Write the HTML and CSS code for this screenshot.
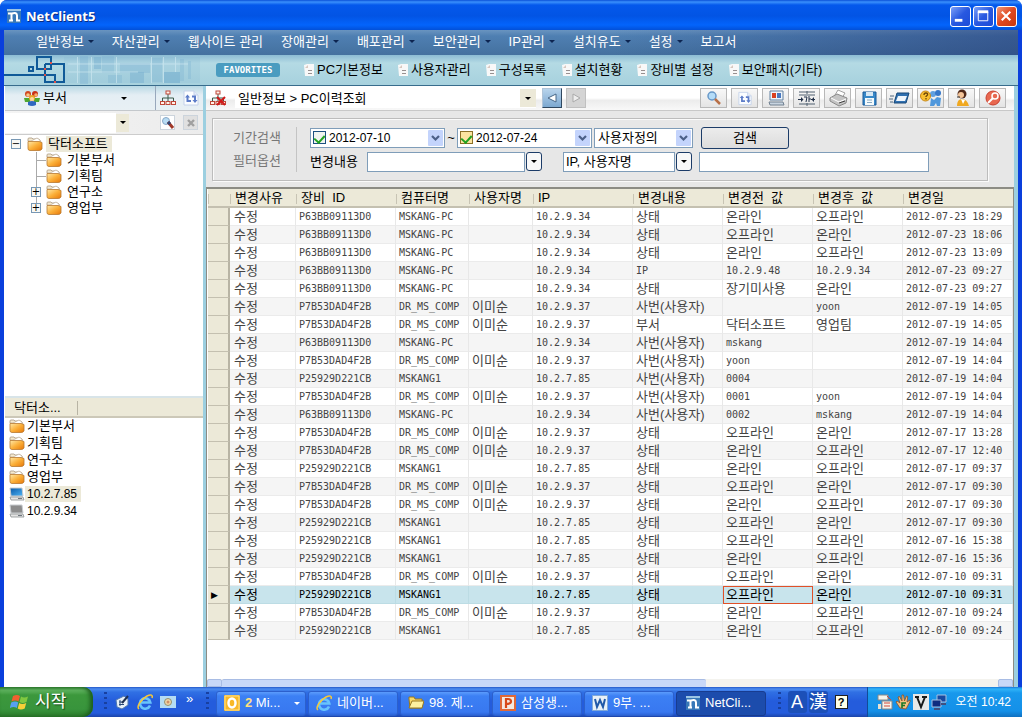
FILE: index.html
```html
<!DOCTYPE html>
<html lang="ko">
<head>
<meta charset="utf-8">
<title>NetClient5</title>
<link rel="stylesheet" href="styles.css">
</head>
<body>
<svg class="defs" aria-hidden="true">
  <defs>
    <linearGradient id="gold" x1="0" y1="0" x2="1" y2="1"><stop offset="0" stop-color="#ffe9a8"/><stop offset=".5" stop-color="#fbb03a"/><stop offset="1" stop-color="#e87808"/></linearGradient>
    <linearGradient id="screen" x1="0" y1="0" x2="1" y2="1"><stop offset="0" stop-color="#0a58a8"/><stop offset="1" stop-color="#4cb4f4"/></linearGradient>
    <symbol id="folder" viewBox="0 0 16 14"><path d="M1 4V2q0-1 1-1h3l1 1h5l2 1v4" fill="#f6ead0" stroke="#a89880" stroke-width=".8"/><path d="M1 4h3l6-3 3 2v3" fill="#fff" stroke="#b8a890" stroke-width=".7"/><path d="M1 4.500h11l3 1v6.500q-1 1.500-3 1.500H3q-2 0-2-2z" fill="url(#gold)" stroke="#b87830" stroke-width=".8"/></symbol>
    <symbol id="doc" viewBox="0 0 10 12"><path d="M0 1l3-1h7v12H1z" fill="#f8f8f8"/><path d="M1 4L4 1v3z" fill="#d8c8c0"/><path d="M4 6.500h4M4 9.500h4" stroke="#989090"/></symbol>
    <symbol id="org" viewBox="0 0 16 16"><path d="M8 4v4M2.500 11V8h11v3M8 8v3" fill="none" stroke="#385848"/><g fill="#fff0e8" stroke="#c04838"><rect x="6" y="1" width="4" height="3"/><rect x=".5" y="11.500" width="4" height="3"/><rect x="6" y="11.500" width="4" height="3"/><rect x="11.500" y="11.500" width="4" height="3"/></g></symbol>
    <symbol id="sync" viewBox="0 0 16 16"><path d="M2 1h9l4 4v10H1V1z" fill="#fbfdff" stroke="#c4d2ea"/><path d="M11 1v4h4" fill="#e4ecfa" stroke="#c4d2ea"/><path d="M4.500 6v5h3.500M12 11.500V6.500H9" fill="none" stroke="#5c7cc8" stroke-width="2"/><path d="M2 7.500l2.500-3 2.500 3zM9.500 10l2.500 3 2.500-3z" fill="#5c7cc8"/></symbol>
    <symbol id="netlogo" viewBox="0 0 14 14"><rect width="14" height="14" fill="#3878b8"/><path d="M1 4.500h4q5-1.500 5 2v5h3" fill="none" stroke="#fff" stroke-width="2"/><path d="M4.500 4v7M2 11.500h4" stroke="#fff" stroke-width="2"/><path d="M0 0h14v2H0z" fill="#9cc4e4"/></symbol>
    <symbol id="chev" viewBox="0 0 15 16"><rect width="15" height="16" rx="1" fill="#c4d4fc"/><path d="M4 6l3.500 3.500L11 6" fill="none" stroke="#4c6088" stroke-width="2.200"/></symbol>
    <symbol id="ie" viewBox="0 0 16 16"><path d="M13 11.500A5.200 5.200 0 1 1 13.300 8.500H4" fill="none" stroke="#68c4fc" stroke-width="2.600"/><path d="M2 15C-1 13 4 5 10 2c4-2 6-1 5 2" fill="none" stroke="#f8c838" stroke-width="1.500"/></symbol>
    <symbol id="pc" viewBox="0 0 16 14"><path d="M1 1h12l1 8H2z" stroke="#c8ccd0"/><path d="M1 10h13l1 3H2z" fill="#e4e4e4" stroke="#8c9090" stroke-width=".8"/><path d="M9 11.500h4" stroke="#707880"/></symbol>
  </defs>
</svg>

<div class="window">
  <header class="titlebar">
    <svg class="i14"><use href="#netlogo"/></svg>
    <h1>NetClient5</h1>
    <div class="winctl">
      <button aria-label="최소화"><svg viewBox="0 0 20 20"><path d="M4 14h8" stroke="#fff" stroke-width="3"/></svg></button>
      <button aria-label="최대화"><svg viewBox="0 0 20 20"><path d="M4.500 5v9.500h10V5" fill="none" stroke="#fff"/><path d="M4 5h11" stroke="#fff" stroke-width="3"/></svg></button>
      <button class="close" aria-label="닫기"><svg viewBox="0 0 20 20"><path d="M5 5l9 9M14 5l-9 9" stroke="#fff" stroke-width="2.200"/></svg></button>
    </div>
  </header>

  <div class="frame">
    <nav class="menubar">
      <button class="drop">일반정보</button><button class="drop">자산관리</button><button>웹사이트 관리</button><button class="drop">장애관리</button><button class="drop">배포관리</button><button class="drop">보안관리</button><button class="drop">IP관리</button><button class="drop">설치유도</button><button class="drop">설정</button><button>보고서</button>
    </nav>

    <div class="favbar">
      <svg class="banner" viewBox="0 0 200 30" aria-hidden="true">
        <g fill="#78b0d0"><path d="M60 2h136v26H60z" opacity=".15"/><path d="M76 1h8v28h-8z" opacity=".35"/><path d="M90 2h7v12h-7z" opacity=".5"/><path d="M98 1h12v17H98z" opacity=".3"/><path d="M116 8h30v10h-30z" opacity=".35"/><path d="M126 17h14v11h-14z" opacity=".5"/><path d="M148 3h10v24h-10z" opacity=".3"/><path d="M160 17h16v11h-16z" opacity=".65"/><path d="M104 20h14v8h-14zM176 4h4v22h-4zM184 6h3v18h-3z" opacity=".3"/></g>
        <path d="M64 9h120M64 17h70M73.500 2v26M87.500 2v26M112.500 2v26M147.500 2v26M159.500 2v26M171.500 2v15" stroke="#d4ecf4" opacity=".6"/>
        <path d="M0 20h46M25 12h4v4h-4zM33 2h14v12H33zM41 9h19v18H41M41 9v10M41 20h10v7h-10z" fill="none" stroke="#105a98" stroke-width="2"/>
        <path d="M46 7h2v2h-2zM40 13h2v2h-2zM40 19h2v2h-2zM50 26h2v2h-2z" fill="#e05048"/>
      </svg>
      <span class="badge">FAVORITES</span>
      <a href="#"><svg><use href="#doc"/></svg>PC기본정보</a>
      <a href="#"><svg><use href="#doc"/></svg>사용자관리</a>
      <a href="#"><svg><use href="#doc"/></svg>구성목록</a>
      <a href="#"><svg><use href="#doc"/></svg>설치현황</a>
      <a href="#"><svg><use href="#doc"/></svg>장비별 설정</a>
      <a href="#"><svg><use href="#doc"/></svg>보안패치(기타)</a>
    </div>

    <div class="work">
      <aside class="side">
        <div class="sidebar-head">
          <button class="group drop"><svg class="i16" viewBox="0 0 16 16"><circle cx="4" cy="4" r="3" fill="#d04820"/><circle cx="11" cy="4" r="3" fill="#c83018"/><circle cx="4" cy="5" r="1.800" fill="#f8c888"/><circle cx="12" cy="5" r="1.800" fill="#f8b070"/><path d="M0 8h6v4H1zM10 8h6l-1 4h-5z" fill="#50a830"/><circle cx="8" cy="8" r="3" fill="#e8a828"/><circle cx="8" cy="9" r="2" fill="#fcd8a0"/><path d="M4 12q4-2 8 0v3q-4 2-8 0z" fill="#3068c0"/></svg><span>부서</span></button>
          <div class="side-tools">
            <button aria-label="조직도"><svg class="i16"><use href="#org"/></svg></button>
            <button aria-label="새로고침"><svg class="i16"><use href="#sync"/></svg></button>
          </div>
        </div>
        <div class="side-search">
          <input type="text" aria-label="부서 검색">
          <button class="tan drop" aria-label="목록"></button>
          <button class="mini" aria-label="찾기"><svg class="i14" viewBox="0 0 14 14"><circle cx="5" cy="5" r="3.500" fill="#b8dcf4" stroke="#88a8c8"/><path d="M7 6l5 6" stroke="#a03828" stroke-width="3"/><path d="M7 6l2 2" stroke="#304878" stroke-width="3"/></svg></button>
          <button class="mini off" aria-label="지우기"><svg class="i14" viewBox="0 0 14 14"><path d="M4 4l6 6M10 4l-6 6" stroke="#a0a0a0" stroke-width="2.400"/></svg></button>
        </div>
        <ul class="tree">
          <li class="root"><button class="twist" aria-label="접기">−</button><svg class="fold"><use href="#folder"/></svg><span class="picked">닥터소프트</span></li>
          <li><i></i><svg class="fold"><use href="#folder"/></svg><span>기본부서</span></li>
          <li><i></i><svg class="fold"><use href="#folder"/></svg><span>기획팀</span></li>
          <li><button class="twist" aria-label="펼치기">+</button><svg class="fold"><use href="#folder"/></svg><span>연구소</span></li>
          <li class="last"><button class="twist" aria-label="펼치기">+</button><svg class="fold"><use href="#folder"/></svg><span>영업부</span></li>
        </ul>
        <div class="list-head"><span>닥터소...</span></div>
        <ul class="list">
          <li><svg class="fold"><use href="#folder"/></svg><span>기본부서</span></li>
          <li><svg class="fold"><use href="#folder"/></svg><span>기획팀</span></li>
          <li><svg class="fold"><use href="#folder"/></svg><span>연구소</span></li>
          <li><svg class="fold"><use href="#folder"/></svg><span>영업부</span></li>
          <li class="num"><svg class="fold" fill="url(#screen)"><use href="#pc"/></svg><span class="picked">10.2.7.85</span></li>
          <li class="num"><svg class="fold" fill="#8c8c8c"><use href="#pc"/></svg><span>10.2.9.34</span></li>
        </ul>
      </aside>

      <main class="main">
        <div class="toolbar">
          <svg class="i16 path-icon" viewBox="0 0 16 16"><use href="#org"/><path d="M7 7l8 8M15 7l-8 8" stroke="#d01818" stroke-width="2"/></svg>
          <div class="path">
            <input type="text" aria-label="경로" value="일반정보 &gt; PC이력조회">
            <button class="tan drop" aria-label="목록"></button>
          </div>
          <button class="nav back" aria-label="뒤로"><svg viewBox="0 0 16 16"><path d="M12 4v8L4 8z" fill="#fff" stroke="#486888"/></svg></button>
          <button class="nav" aria-label="앞으로"><svg viewBox="0 0 16 16"><path d="M5 4v8l7-4z" fill="#eee" stroke="#aaa"/></svg></button>
          <div class="tools">
            <button aria-label="검색"><svg viewBox="0 0 24 18"><circle cx="10" cy="7" r="4" fill="#b4dcf8" stroke="#6898c8" stroke-width="1.500"/><path d="M13 10l5 5" stroke="#b87048" stroke-width="2.500"/></svg></button>
            <button aria-label="새로고침"><svg viewBox="0 0 24 18"><use href="#sync" x="5" y="2" width="14" height="15"/></svg></button>
            <button aria-label="원격"><svg viewBox="0 0 24 18"><path d="M6 2h13v9H6z" fill="#eef4fa" stroke="#6080a0"/><path d="M8 4h4v5H8z" fill="#d84020"/><path d="M13 4h4v5h-4z" fill="#4878c0"/><path d="M5 13h14l1 3H6z" fill="#c8d4e0" stroke="#708090"/></svg></button>
            <button aria-label="열 너비"><svg viewBox="0 0 24 18"><path d="M4 3h16M4 15h16M4 6h16M12 2v3M12 14v3" stroke="#506070"/><path d="M3 10.500h5M20 10.500h-4M9 8h3l-1 5M14 7v6M14 10h2" fill="none" stroke="#203048"/><path d="M6 8l2.500 2.500L6 13zM19 8l-2.500 2.500L19 13z" fill="#203048"/></svg></button>
            <button aria-label="인쇄"><svg viewBox="0 0 24 18"><path d="M9 6l3-5 7 3-3 5z" fill="#fff" stroke="#a0a0a0"/><path d="M4 9l7-4 10 4-1 5-7 3-9-5z" fill="#c4c4c4" stroke="#888"/><path d="M5 9l8 4 7-3" fill="none" stroke="#fff"/><path d="M13 14l6-2" stroke="#404040"/></svg></button>
            <button aria-label="저장"><svg viewBox="0 0 24 18"><path d="M6 3h13v13H6z" fill="#3888c8" stroke="#185898"/><path d="M9 3h7v4H9z" fill="#d8e8f4"/><path d="M8 9h9v7H8z" fill="#f4fafc"/><path d="M10 11h5M10 13.500h5" stroke="#88a8c0"/></svg></button>
            <button aria-label="보내기"><svg viewBox="0 0 24 18"><path d="M9 4h12l-3 10H6z" fill="#3070b0" stroke="#184878"/><path d="M10 7h9l-2 5H8z" fill="#f0f6fc"/><path d="M2 7h4M1 10h4M2 13h3" stroke="#506880"/></svg></button>
            <button aria-label="도움말"><svg viewBox="0 0 24 18"><circle cx="14" cy="5" r="3" fill="#60a0e0"/><circle cx="19" cy="4" r="3" fill="#3878c8"/><path d="M11 17l1-8 3 2 3-3 4 1-1 8h-3l-1-3-2 3z" fill="#5098dc"/><circle cx="6.500" cy="7" r="5" fill="#f8c030" stroke="#c88818"/><path d="M5 6q0-2 2-2t1.500 2L7 7.500V8M7 9v1.500" fill="none" stroke="#704808" stroke-width="1.300"/></svg></button>
            <button aria-label="상담"><svg viewBox="0 0 24 18"><circle cx="12" cy="5" r="4.500" fill="#502818"/><circle cx="11" cy="6" r="3" fill="#f4c498"/><path d="M7 17q0-7 5-7t7 7z" fill="#f0a820"/><path d="M11 10l2 5 2-4" fill="#fff"/><path d="M7 8h3" stroke="#303030"/></svg></button>
            <button aria-label="종료"><svg viewBox="0 0 24 18"><circle cx="12" cy="9" r="7" fill="#e86850" stroke="#c84030"/><circle cx="14" cy="7" r="3" fill="none" stroke="#fff" stroke-width="1.500"/><path d="M12 9l-5 5" stroke="#fff" stroke-width="2"/></svg></button>
          </div>
        </div>

        <form class="filter">
          <fieldset>
            <div class="captions"><span>기간검색</span><span>필터옵션</span></div>
            <div class="rows">
              <div class="row">
                <div class="date"><input type="checkbox" checked aria-label="시작일 사용"><input type="text" aria-label="시작일" value="2012-07-10"><button type="button" aria-label="달력"><svg><use href="#chev"/></svg></button></div>
                <span class="tilde">~</span>
                <div class="date"><input class="warm" type="checkbox" checked aria-label="종료일 사용"><input type="text" aria-label="종료일" value="2012-07-24"><button type="button" aria-label="달력"><svg><use href="#chev"/></svg></button></div>
                <div class="period"><select aria-label="기간"><option>사용자정의</option></select><svg><use href="#chev"/></svg></div>
                <button type="button" class="go">검색</button>
              </div>
              <div class="row">
                <label for="change">변경내용</label>
                <input class="box change" id="change" type="text">
                <button type="button" class="dd drop" aria-label="변경내용 목록"></button>
                <input class="box field" type="text" aria-label="검색 항목" value="IP, 사용자명">
                <button type="button" class="dd drop" aria-label="항목 목록"></button>
                <input class="box word" type="text" aria-label="검색어">
              </div>
            </div>
          </fieldset>
        </form>

        <div class="grid">
          <table>
            <colgroup><col class="c0"><col class="c1"><col class="c2"><col class="c3"><col class="c4"><col class="c5"><col class="c6"><col class="c6"><col class="c6"><col></colgroup>
            <thead><tr><th></th><th>변경사유</th><th>장비&nbsp; ID</th><th>컴퓨터명</th><th>사용자명</th><th>IP</th><th>변경내용</th><th>변경전&nbsp; 값</th><th>변경후&nbsp; 값</th><th>변경일</th></tr></thead>
            <tbody>
              <tr><th></th><td>수정</td><td>P63BB09113D0</td><td>MSKANG-PC</td><td></td><td>10.2.9.34</td><td>상태</td><td>온라인</td><td>오프라인</td><td>2012-07-23 18:29</td></tr>
              <tr><th></th><td>수정</td><td>P63BB09113D0</td><td>MSKANG-PC</td><td></td><td>10.2.9.34</td><td>상태</td><td>오프라인</td><td>온라인</td><td>2012-07-23 18:06</td></tr>
              <tr><th></th><td>수정</td><td>P63BB09113D0</td><td>MSKANG-PC</td><td></td><td>10.2.9.34</td><td>상태</td><td>온라인</td><td>오프라인</td><td>2012-07-23 13:09</td></tr>
              <tr><th></th><td>수정</td><td>P63BB09113D0</td><td>MSKANG-PC</td><td></td><td>10.2.9.34</td><td class="m">IP</td><td class="m">10.2.9.48</td><td class="m">10.2.9.34</td><td>2012-07-23 09:27</td></tr>
              <tr><th></th><td>수정</td><td>P63BB09113D0</td><td>MSKANG-PC</td><td></td><td>10.2.9.34</td><td>상태</td><td>장기미사용</td><td>온라인</td><td>2012-07-23 09:27</td></tr>
              <tr><th></th><td>수정</td><td>P7B53DAD4F2B</td><td>DR_MS_COMP</td><td>이미순</td><td>10.2.9.37</td><td>사번(사용자)</td><td></td><td class="m">yoon</td><td>2012-07-19 14:05</td></tr>
              <tr><th></th><td>수정</td><td>P7B53DAD4F2B</td><td>DR_MS_COMP</td><td>이미순</td><td>10.2.9.37</td><td>부서</td><td>닥터소프트</td><td>영업팀</td><td>2012-07-19 14:05</td></tr>
              <tr><th></th><td>수정</td><td>P63BB09113D0</td><td>MSKANG-PC</td><td></td><td>10.2.9.34</td><td>사번(사용자)</td><td class="m">mskang</td><td></td><td>2012-07-19 14:04</td></tr>
              <tr><th></th><td>수정</td><td>P7B53DAD4F2B</td><td>DR_MS_COMP</td><td>이미순</td><td>10.2.9.37</td><td>사번(사용자)</td><td class="m">yoon</td><td></td><td>2012-07-19 14:04</td></tr>
              <tr><th></th><td>수정</td><td>P25929D221CB</td><td>MSKANG1</td><td></td><td>10.2.7.85</td><td>사번(사용자)</td><td class="m">0004</td><td></td><td>2012-07-19 14:04</td></tr>
              <tr><th></th><td>수정</td><td>P7B53DAD4F2B</td><td>DR_MS_COMP</td><td>이미순</td><td>10.2.9.37</td><td>사번(사용자)</td><td class="m">0001</td><td class="m">yoon</td><td>2012-07-19 14:04</td></tr>
              <tr><th></th><td>수정</td><td>P63BB09113D0</td><td>MSKANG-PC</td><td></td><td>10.2.9.34</td><td>사번(사용자)</td><td class="m">0002</td><td class="m">mskang</td><td>2012-07-19 14:04</td></tr>
              <tr><th></th><td>수정</td><td>P7B53DAD4F2B</td><td>DR_MS_COMP</td><td>이미순</td><td>10.2.9.37</td><td>상태</td><td>오프라인</td><td>온라인</td><td>2012-07-17 13:28</td></tr>
              <tr><th></th><td>수정</td><td>P7B53DAD4F2B</td><td>DR_MS_COMP</td><td>이미순</td><td>10.2.9.37</td><td>상태</td><td>온라인</td><td>오프라인</td><td>2012-07-17 12:40</td></tr>
              <tr><th></th><td>수정</td><td>P25929D221CB</td><td>MSKANG1</td><td></td><td>10.2.7.85</td><td>상태</td><td>온라인</td><td>오프라인</td><td>2012-07-17 09:37</td></tr>
              <tr><th></th><td>수정</td><td>P7B53DAD4F2B</td><td>DR_MS_COMP</td><td>이미순</td><td>10.2.9.37</td><td>상태</td><td>오프라인</td><td>온라인</td><td>2012-07-17 09:30</td></tr>
              <tr><th></th><td>수정</td><td>P7B53DAD4F2B</td><td>DR_MS_COMP</td><td>이미순</td><td>10.2.9.37</td><td>상태</td><td>온라인</td><td>오프라인</td><td>2012-07-17 09:30</td></tr>
              <tr><th></th><td>수정</td><td>P25929D221CB</td><td>MSKANG1</td><td></td><td>10.2.7.85</td><td>상태</td><td>오프라인</td><td>온라인</td><td>2012-07-17 09:30</td></tr>
              <tr><th></th><td>수정</td><td>P25929D221CB</td><td>MSKANG1</td><td></td><td>10.2.7.85</td><td>상태</td><td>오프라인</td><td>오프라인</td><td>2012-07-16 15:38</td></tr>
              <tr><th></th><td>수정</td><td>P25929D221CB</td><td>MSKANG1</td><td></td><td>10.2.7.85</td><td>상태</td><td>온라인</td><td>오프라인</td><td>2012-07-16 15:36</td></tr>
              <tr><th></th><td>수정</td><td>P7B53DAD4F2B</td><td>DR_MS_COMP</td><td>이미순</td><td>10.2.9.37</td><td>상태</td><td>오프라인</td><td>온라인</td><td>2012-07-10 09:31</td></tr>
              <tr class="current"><th>▶</th><td>수정</td><td>P25929D221CB</td><td>MSKANG1</td><td></td><td>10.2.7.85</td><td>상태</td><td class="focus">오프라인</td><td>온라인</td><td>2012-07-10 09:31</td></tr>
              <tr><th></th><td>수정</td><td>P7B53DAD4F2B</td><td>DR_MS_COMP</td><td>이미순</td><td>10.2.9.37</td><td>상태</td><td>온라인</td><td>오프라인</td><td>2012-07-10 09:24</td></tr>
              <tr><th></th><td>수정</td><td>P25929D221CB</td><td>MSKANG1</td><td></td><td>10.2.7.85</td><td>상태</td><td>온라인</td><td>오프라인</td><td>2012-07-10 09:24</td></tr>
            </tbody>
          </table>
        </div>
        <div class="hscroll"><span class="end"></span><span class="thumb"></span><span class="track"></span><span class="end"></span></div>
      </main>
    </div>
  </div>
</div>

<footer class="taskbar">
  <button class="start"><svg viewBox="0 0 20 18"><path d="M3 3q4-2 7 0L8.500 8.500q-3-2-7 0z" fill="#f06030"/><path d="M11 3.500q3 2 7 0L16.500 9q-4 2-7 0z" fill="#80c840"/><path d="M1.200 9.500q4-2 7 0L6.800 15q-3-2-7 0z" fill="#58a0f0"/><path d="M9.200 10q3 2 7 0l-1.500 5.500q-4 2-7 0z" fill="#f8d038"/></svg>시작</button>
  <span class="grip"></span>
  <div class="quick">
    <button aria-label="바탕 화면"><svg class="i16" viewBox="0 0 16 16"><path d="M2 6l8-4 4 3v6l-6 4-5-2z" fill="#e8f0f8" stroke="#5078b0"/><path d="M5 8h5M5 10.500h5M6 6v6" stroke="#284878"/><path d="M8 9l6-7" stroke="#203050" stroke-width="2"/></svg></button>
    <button aria-label="인터넷"><svg class="i16"><use href="#ie"/></svg></button>
    <button aria-label="뷰어"><svg class="i16" viewBox="0 0 16 16"><path d="M0 2h16v12H0z" fill="#b4dcf4"/><circle cx="8" cy="8" r="3.500" fill="#f0d8a8" stroke="#909070"/><circle cx="8" cy="8" r="1.500" fill="#d09068"/></svg></button>
    <span>»</span>
  </div>
  <span class="grip"></span>
  <div class="tasks">
    <button><svg class="i16" viewBox="0 0 16 16"><rect width="16" height="16" rx="1" fill="#f8b828"/><path d="M1 1h14v14H1z" fill="none" stroke="#fce090"/><ellipse cx="8" cy="8" rx="3.500" ry="4.500" fill="none" stroke="#fff" stroke-width="2.500"/></svg><b>2</b>&nbsp;Mi...<em></em></button>
    <button><svg class="i16"><use href="#ie"/></svg>네이버...</button>
    <button><svg class="i16" viewBox="0 0 16 16"><path d="M1 4V2h5l1 2h7v9H2z" fill="#f8d868" stroke="#987820"/><path d="M1 13l3-7h12l-2 7z" fill="#fcf0a0" stroke="#987820"/></svg>98. 제...</button>
    <button><svg class="i16" viewBox="0 0 16 16"><rect width="16" height="16" fill="#f4e8e0"/><rect x="1" y="1" width="14" height="14" fill="none" stroke="#e06838" stroke-width="2"/><path d="M6 13V4h2q3 0 3 2.500T6 9" fill="none" stroke="#d84818" stroke-width="2.200"/></svg>삼성생...</button>
    <button><svg class="i16" viewBox="0 0 16 16"><rect width="16" height="16" fill="#e8f0f8"/><rect x=".5" y=".5" width="15" height="15" fill="none" stroke="#80a8d8"/><path d="M3 4l2 8 3-7 3 7 2-8" fill="none" stroke="#2058a8" stroke-width="2"/></svg>9부. ...</button>
    <button class="on"><svg class="i14"><use href="#netlogo"/></svg>NetCli...</button>
  </div>
  <span class="grip"></span>
  <div class="lang"><button class="key">A</button><button class="key">漢</button><button class="help">?</button></div>
  <div class="tray">
    <svg class="i16" viewBox="0 0 16 16"><path d="M1 1h10v5H1zM5 7h10v8H5z" fill="#f4f4ec" stroke="#888"/><path d="M1 10h3v5H1z" fill="#e8e0d0"/><path d="M10 2l4 4M7 9h6M7 12h6" stroke="#d04838"/></svg>
    <svg class="i16" viewBox="0 0 16 16"><path d="M5 14L1 8l1-1 3 2-2-6 1.500-.5L7 7V1h1.500L9.500 7l2-5 1.200.5L12 8l3-2v1.500L11 15z" fill="#f4c080" stroke="#905020" stroke-width=".8"/><path d="M7 14V9h4M7 11.500h3" fill="none" stroke="#187828" stroke-width="1.600"/></svg>
    <svg class="i16" viewBox="0 0 16 16"><rect width="16" height="16" fill="#e8e8e8"/><path d="M2 3h4M9 3h5M4 3l4 10 4-10" fill="none" stroke="#181818" stroke-width="2"/></svg>
    <svg class="i16" viewBox="0 0 16 16"><path d="M6 1h9v7H6z" fill="#1848a0" stroke="#a8c0e0"/><path d="M1 6h9v7H1z" fill="#102c80" stroke="#a8c0e0"/><path d="M3 15h6M10 10h5" stroke="#405080" stroke-width="2"/></svg>
    <time>오전 10:42</time>
  </div>
</footer>
</body>
</html>
```
FILE: styles.css
```css
* { box-sizing: border-box; }
body {
  margin: 0;
  height: 100vh;
  display: flex;
  flex-direction: column;
  overflow: hidden;
  background: #fff;
  color: #000;
  font: 13px/16px "Liberation Sans", "Noto Sans CJK KR", sans-serif;
}
button, input, select { font: inherit; color: inherit; margin: 0; padding: 0; border: 0; border-radius: 0; outline: 0; }
button { background: none; display: flex; align-items: center; white-space: nowrap; }
input[type="text"] { min-width: 0; background: #fff; }
ul { margin: 0; padding: 0; list-style: none; }
a { color: inherit; text-decoration: none; }
svg { flex: none; display: block; }
.defs { position: absolute; width: 0; height: 0; }
.i14 { width: 14px; height: 14px; }
.i16 { width: 16px; height: 16px; }
.fold { width: 16px; height: 14px; }
.drop::after {
  content: "";
  border: 3px solid transparent;
  border-top-color: currentColor;
  border-bottom: 0;
}

/* window */
.window { flex: 1; min-height: 0; display: flex; flex-direction: column; background: #0a3fdc; border-radius: 7px 7px 0 0; }
.titlebar {
  height: 30px;
  flex: none;
  display: flex;
  align-items: center;
  gap: 5px;
  padding: 2px 5px 0 7px;
  border-radius: 7px 7px 0 0;
  background: linear-gradient(#0a50d8, #3a90fc 2px, #0458ec 5px, #0254e4 16px, #0364fc 25px, #0250d8);
}
.titlebar h1 { margin: 0; flex: 1; font: bold 13px/16px "Noto Sans", sans-serif; color: #fff; text-shadow: 1px 1px #0a2c80; }
.winctl { display: flex; gap: 2px; }
.winctl button { width: 21px; height: 21px; border: 1px solid #fff; border-radius: 3px; background: linear-gradient(135deg, #7ca0f8, #2858e0 50%, #1c4cd8); }
.winctl .close { background: linear-gradient(135deg, #f09878, #e04820 50%, #c83810); }
.winctl svg { width: 19px; height: 19px; }
.frame { flex: 1; min-height: 0; display: flex; flex-direction: column; margin: 0 4px; background: #9ccfe0; }

.menubar {
  flex: none;
  display: flex;
  height: 25px;
  gap: 18px;
  padding-left: 32px;
  padding-bottom: 2px;
  color: #fff;
  background: linear-gradient(90deg, transparent 60%, #243c7890), linear-gradient(#6a94c0, #4f7fb2 6px, #44719f);
}
.menubar .drop::after { margin-left: 4px; border-top-color: #0c2450; }

.favbar {
  flex: none;
  display: flex;
  align-items: center;
  gap: 15px;
  height: 31px;
  border-bottom: 1px solid #386c8c;
  background: linear-gradient(#8cbcd4, #b4dae4 8px, #a8d2de 28px);
}
.favbar .banner { width: 200px; height: 30px; }
.favbar .badge {
  margin: 0 9px 0 -3px;
  width: 64px;
  height: 14px;
  border-radius: 3px;
  background: #4a9cc0;
  color: #fff;
  font: bold 9px/14px "DejaVu Sans Mono", monospace;
  text-align: center;
}
.favbar a { display: flex; align-items: center; gap: 3px; white-space: nowrap; }
.favbar a svg { width: 10px; height: 12px; }

.work { flex: 1; min-height: 0; display: flex; }

/* left panel */
.side { flex: none; width: 199px; margin-right: 3px; padding-left: 1px; display: flex; flex-direction: column; background: #fff; }
.sidebar-head { flex: none; height: 25px; display: flex; background: linear-gradient(#b8d8e4, #e4eef4 9px, #e8f0f4); border-bottom: 1px solid #c4c8cc; }
.group { flex: 1; gap: 3px; padding: 0 28px 0 19px; }
.group span { flex: 1; text-align: left; }
.side-tools { display: flex; gap: 7px; padding: 0 4px; border-left: 1px solid #98a8bc; }
.side-search { flex: none; height: 24px; display: flex; align-items: center; background: linear-gradient(90deg, #f4f4f4, #ececec); border-bottom: 1px solid #ccc; }
.side-search input { width: 111px; height: 20px; }
.tan { width: 13px; height: 18px; justify-content: center; background: #ece9d8; }
.mini { width: 15px; height: 15px; background: #fff; border: 1px solid #ccd4dc; justify-content: center; }
.side-search .mini { margin-left: 31px; }
.side-search .off { margin-left: 8px; background: #e0e0e0; }
.tree { flex: 26 1 0; padding: 1px 0 0 6px; overflow: hidden; }
.tree li { display: flex; align-items: center; height: 16px; gap: 5px; padding-left: 20px; background: linear-gradient(#aaa, #aaa) 25px 0 / 1px 100% no-repeat; }
.tree li.root { padding-left: 0; background: none; }
.tree li.last { background-size: 1px 8px; }
.tree i { width: 10px; height: 1px; margin-left: 5px; margin-right: -5px; background: #aaa; }
.twist { width: 10px; height: 10px; border: 1px solid #7898b4; background: #f8f8f4; justify-content: center; font: 10px/8px "DejaVu Sans", sans-serif; }
.root .fold { margin-left: 1px; }
.picked { background: #ece9d8; padding: 0 4px 0 2px; margin-left: -2px; }
.list-head { flex: none; height: 22px; padding: 3px 0; border-top: 2px solid #d8e4e8; border-bottom: 2px solid #ccc8b8; background: #ece9d8; line-height: 14px; }
.list-head span { display: block; width: 73px; padding-left: 9px; border-right: 1px solid #b8b4a4; }
.list { flex: 27 1 0; padding-left: 4px; overflow: hidden; }
.list li { display: flex; align-items: center; height: 17px; gap: 2px; }
.list .num { font-size: 12px; }

/* right panel */
.main { flex: 1; min-width: 0; margin-right: 4px; display: flex; flex-direction: column; background: #fff; }
.toolbar { flex: none; height: 25px; display: flex; align-items: center; padding: 0 8px 0 4px; background: linear-gradient(#fff 50%, #ececec 60%, #f8f8f8); border-bottom: 1px solid #c8c8c8; }
.path { display: flex; align-items: center; width: 301px; margin: 0 6px 0 9px; background: #fff; }
.path input { flex: 1; padding: 0 0 2px 3px; height: 20px; }
.path .tan { width: 16px; }
.nav { width: 20px; height: 20px; justify-content: center; border: 1px solid #c0c0c0; background: #d4d4d4; margin-right: 4px; }
.nav.back { background: linear-gradient(#b8d4ec, #7ca8d0); border-color: #b0c4d8 #304860 #304860 #b0c4d8; }
.nav svg { width: 16px; height: 16px; }
.tools { margin-left: auto; display: flex; gap: 4px; }
.tools button { width: 27px; height: 20px; justify-content: center; border: 1px solid #b8b8b8; background: linear-gradient(#f8f8f8, #e4e4e4); }
.tools svg { width: 24px; height: 18px; }

.filter { flex: none; padding: 7px 26px 6px 6px; background: #e7e7e7; }
.filter fieldset { margin: 0; padding: 8px 0; min-width: 0; height: 63px; border: 1px solid #bcbcbc; box-shadow: inset 1px 1px #fafafa, 1px 1px #fafafa; display: flex; }
.captions { width: 84px; padding-left: 20px; display: flex; flex-direction: column; justify-content: space-between; border-right: 1px solid #c4c4c4; color: #777; line-height: 22px; }
.rows { display: flex; flex-direction: column; gap: 3px; padding-left: 13px; }
.row { display: flex; align-items: center; height: 21px; }
.date { width: 135px; height: 20px; display: flex; align-items: center; padding: 0 1px 0 2px; background: #fff; border: 1px solid #7f9db9; }
.date input[type="text"] { flex: 1; width: 60px; padding-left: 3px; font-size: 12px; }
.date svg { width: 15px; height: 16px; }
.date input[type="checkbox"] { appearance: none; width: 13px; height: 13px; border: 1px solid #1c5180; background: #f0f4f0; display: flex; align-items: center; justify-content: center; }
.date input.warm { border-color: #8c7028; background: #fce4a0; }
.date input[type="checkbox"]::before { content: ""; width: 5px; height: 8px; border: solid #21a121; border-width: 0 2px 2px 0; transform: rotate(42deg); }
.tilde { width: 12px; text-align: center; }
.period { position: relative; width: 99px; height: 20px; margin: 0 8px 0 2px; }
.period select { appearance: none; width: 100%; height: 100%; padding-left: 3px; background: #fff; border: 1px solid #7f9db9; }
.period svg { position: absolute; right: 2px; top: 2px; width: 15px; height: 16px; pointer-events: none; }
.go { width: 88px; height: 22px; justify-content: center; border: 1px solid #1c3c68; border-radius: 3px; background: linear-gradient(#ececec, #dcdcdc); }
.row label { width: 57px; }
.box { height: 20px; border: 1px solid #7f9db9; }
.change { width: 158px; }
.dd { width: 16px; height: 19px; margin-left: 1px; justify-content: center; border: 1px solid #1c3c68; border-radius: 3px; background: #f8f8f8; }
.field { width: 112px; margin-left: 21px; padding: 0 0 2px 2px; }
.word { width: 230px; margin-left: 7px; }

.grid { flex: 1; min-height: 0; overflow: hidden; border: solid #8c8c84; border-width: 2px 1px 0 1px; padding-left: 1px; }
table { width: 100%; table-layout: fixed; border-collapse: separate; border-spacing: 0; color: #444; }
.c0 { width: 22px; }
.c1 { width: 66px; }
.c2, .c5 { width: 100px; }
.c3 { width: 73px; }
.c4 { width: 64px; }
.c6 { width: 90px; }
th, td { padding: 0 0 0 4px; text-align: left; font-weight: normal; white-space: nowrap; overflow: hidden; }
thead th { height: 19px; line-height: 16px; padding-left: 5px; color: #000; background: linear-gradient(90deg, #c8c4b4, #c8c4b4) 0 5px / 1px 10px no-repeat, #ece9d8; border-bottom: 2px solid #c4c0b0; }
tbody th { height: 18px; padding: 0 0 0 3px; background: #ece9d8; border-bottom: 1px solid #c4c0b0; border-right: 2px solid #b8b4a4; color: #000; font: 9px/16px "DejaVu Sans", sans-serif; }
td { height: 18px; line-height: 17px; padding-left: 3px; border-right: 1px solid #e8e8e8; border-bottom: 1px solid #ebebeb; }
td:nth-child(2) { padding-left: 4px; }
tbody tr:nth-child(even) { background: #f5f5f5; }
td:nth-child(3), td:nth-child(4), td:nth-child(6), td:nth-child(10), td.m { font-family: "DejaVu Sans Mono", monospace; font-size: 10px; }
tbody tr.current { background: #c8e4ec; color: #000; }
.current td { border-color: #bcdce4; }
.current td.focus { border: 1px solid #e05028; padding-left: 2px; line-height: 16px; }

.hscroll { flex: none; height: 8px; display: flex; border: solid #8c8c84; border-width: 0 1px; background: #f4f3ee; }
.hscroll .end { width: 15px; background: #c8d8f8; border: 1px solid #a8bce4; border-radius: 2px 2px 0 0; }
.hscroll .thumb { width: 60%; background: #c8d8f8; border-top: 1px solid #a8bce4; border-radius: 2px 2px 0 0; }
.hscroll .track { flex: 1; }

/* taskbar */
.taskbar {
  flex: none;
  height: 30px;
  display: flex;
  align-items: center;
  color: #fff;
  background: linear-gradient(#2458c8, #4c8cf0 2px, #3070e4 5px, #245cdc 14px, #245cdc 26px, #1c44a8);
}
.start { width: 93px; height: 30px; padding-left: 10px; gap: 5px; font-size: 17px; text-shadow: 1px 1px 1px #184818; border-radius: 0 10px 10px 0; background: linear-gradient(#3c8c3c, #60b460 3px, #3c983c 8px, #38943c 22px, #2c7c2c); box-shadow: inset -3px 0 4px #1c5c1c; }
.start svg { width: 20px; height: 18px; }
.grip { width: 3px; height: 20px; margin: 0 7px 0 11px; background: repeating-linear-gradient(#1840a0 0 2px, transparent 2px 5px); }
.quick { display: flex; align-items: center; gap: 7px; width: 81px; }
.quick span { margin-left: 3px; align-self: flex-start; line-height: 10px; }
.tasks { flex: 1; min-width: 0; display: grid; grid-template-columns: repeat(6, 90px); gap: 2px; padding-top: 2px; }
.tasks button { height: 25px; gap: 5px; padding: 0 5px 0 7px; border: 1px solid #2c60cc; border-radius: 3px; background: linear-gradient(#5c9cfc, #3c80f4 4px, #3878f0 20px, #2c64d8); }
.tasks b { color: #ffe080; margin-right: -5px; }
.tasks em { margin-left: auto; border: 3px solid transparent; border-top-color: #fff; border-bottom: 0; }
.tasks .on { padding-left: 9px; background: #1c4cac; border-color: #183c90; }
.lang { display: flex; align-items: center; gap: 2px; width: 79px; }
.key { width: 19px; height: 22px; justify-content: center; background: #1c50b8; border-radius: 3px; font-size: 18px; }
.help { width: 13px; height: 14px; margin-left: 5px; justify-content: center; background: #ffffe8; border: 1px solid #202020; color: #000; font: bold 11px/12px "Liberation Sans", sans-serif; }
.tray { height: 30px; display: flex; align-items: center; gap: 2px; padding: 0 11px 0 9px; border-left: 1px solid #104c98; background: linear-gradient(#1878d8, #30b4f8 2px, #1898ec 6px, #1490e8 24px, #1070c0); }
.tray time { margin-left: 7px; font-size: 12px; white-space: nowrap; }
```
